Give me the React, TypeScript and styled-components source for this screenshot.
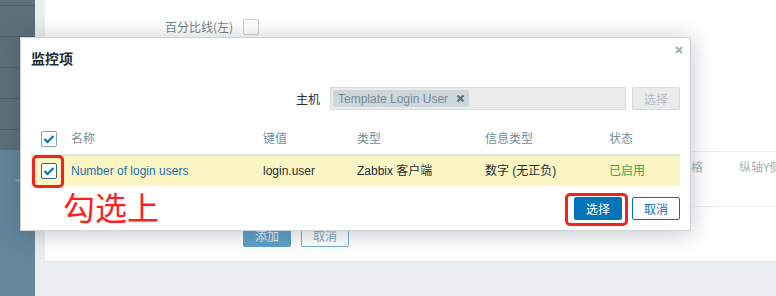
import React from "react";
import styled, { createGlobalStyle, css } from "styled-components";

const FONT = `"Liberation Sans", Arial, "Noto Sans CJK SC", sans-serif`;
const CJK = `"Noto Sans CJK SC", "Liberation Sans", sans-serif`;

const GlobalStyle = createGlobalStyle`
  html, body {
    margin: 0;
    padding: 0;
  }
  body {
    width: 776px;
    height: 296px;
    overflow: hidden;
    font-family: ${FONT};
    font-size: 12px;
    color: #1f2c33;
    background: #ebeef0;
  }
`;

const Page = styled.div`
  position: relative;
  display: flex;
  width: 776px;
  height: 296px;
  overflow: hidden;
`;

/* ---------- background page (faded behind the dialog) ---------- */

const Sidebar = styled.nav`
  flex: none;
  width: 35px;
  background: #64859b;
  display: flex;
  flex-direction: column;
`;

const MenuBlock = styled.div`
  height: 150px;
  padding-top: 5px;
  box-sizing: border-box;
  background: #5c6f7b;
  overflow: hidden;
`;

const MenuItem = styled.div`
  height: 31px;
  box-sizing: border-box;
  border-top: 1px solid #4f616c;
`;

const Chevron = styled.svg`
  margin: 28px 0 0 15px;
`;

const Main = styled.main`
  flex: 1;
  padding-left: 10px;
  background: #ebeef0;
`;

const Panel = styled.section`
  height: 262px;
  box-sizing: border-box;
  padding-top: 19px;
  background: #fff;
  border-bottom: 1px solid #dfe4e7;
`;

const FormRow = styled.div<{ $top?: number }>`
  display: grid;
  grid-template-columns: 188px 1fr;
  column-gap: 10px;
  align-items: center;
  margin-top: ${(p) => p.$top ?? 0}px;
`;

const FormLabel = styled.label`
  text-align: right;
  color: #76858d;
  font-family: ${CJK};
  font-size: 12px;
  line-height: 16px;
`;

const FadedBox = styled.span`
  display: block;
  width: 16px;
  height: 16px;
  box-sizing: border-box;
  border: 1px solid #c8d0d5;
  border-radius: 2px;
  background: #fff;
`;

const BgTable = styled.div`
  height: 56px;
  box-sizing: border-box;
  border-top: 1px solid #eceff1;
  border-bottom: 1px solid #eceff1;
  display: grid;
  grid-template-columns: 270px 142px 84px 1fr;
  align-content: start;
  padding-top: 7px;
  color: #a5b2b9;
  font-family: ${CJK};
  line-height: 16px;
  white-space: nowrap;
`;

const BgButtons = styled.div`
  display: flex;
  gap: 10px;
`;

const BgButton = styled.span<{ $primary?: boolean }>`
  width: 48px;
  height: 22px;
  box-sizing: border-box;
  border-radius: 2px;
  text-align: center;
  line-height: 20px;
  font-family: ${CJK};
  ${(p) =>
    p.$primary
      ? css`
          background: #5d9fc9;
          border: 1px solid #5d9fc9;
          color: #e8f1f7;
        `
      : css`
          background: #fff;
          border: 1px solid #78a9cc;
          color: #7ea6c4;
        `}
`;

/* ---------- dialog ---------- */

const Dialog = styled.div`
  position: absolute;
  left: 20px;
  top: 37px;
  width: 671px;
  height: 194px;
  box-sizing: border-box;
  padding: 11px 10px 0;
  background: #fff;
  border: 1px solid #ccd4d8;
  box-shadow: 0 2px 22px rgba(40, 50, 60, 0.28);
`;

const CloseButton = styled.svg`
  position: absolute;
  top: 8px;
  right: 7px;
`;

const Title = styled.h4`
  margin: 0;
  font-family: ${CJK};
  font-size: 14px;
  line-height: 18px;
  font-weight: 700;
  color: #1f2c33;
`;

const HostRow = styled.div`
  margin-top: 20px;
  display: grid;
  grid-template-columns: 289px 296px 48px;
  column-gap: 10px;
  align-items: center;
  & > :last-child {
    margin-left: -4px;
  }
`;

const HostLabel = styled.label`
  text-align: right;
  font-family: ${CJK};
  line-height: 16px;
  color: #1f2c33;
`;

const MultiSelect = styled.div`
  height: 23px;
  box-sizing: border-box;
  padding: 2px;
  background: #ebebeb;
  border: 1px solid #d9dcdd;
  display: flex;
  align-items: center;
`;

const Tag = styled.span`
  display: inline-flex;
  align-items: center;
  gap: 8px;
  height: 17px;
  padding: 0 4px 0 5px;
  background: #cdd6db;
  border-radius: 2px;
  color: #768d99;
  font-size: 12px;
  line-height: 16px;
`;

const Button = styled.button<{ $variant: "primary" | "outline" | "disabled" }>`
  width: 48px;
  height: 23px;
  padding: 0;
  box-sizing: border-box;
  border-radius: 2px;
  font-family: ${CJK};
  font-size: 12px;
  line-height: 21px;
  cursor: pointer;
  ${(p) =>
    p.$variant === "primary"
      ? css`
          background: #0275b8;
          border: 1px solid #0275b8;
          color: #fff;
        `
      : p.$variant === "outline"
      ? css`
          background: #fff;
          border: 1px solid #0275b8;
          color: #0275b8;
        `
      : css`
          background: #ebebeb;
          border: 1px solid #d9dcdd;
          color: #b5c0c6;
        `}
`;

const TableRow = styled.div<{ $head?: boolean }>`
  display: grid;
  grid-template-columns: 40px 192px 94px 128px 124px 1fr;
  align-items: center;
  height: 30px;
  white-space: nowrap;
  ${(p) =>
    p.$head
      ? css`
          margin-top: 14px;
          border-bottom: 2px solid #dfe4e7;
          color: #768d99;
        `
      : css`
          background: #fbf5c3;
          color: #1f2c33;
        `}
`;

const Cell = styled.div<{ $tone?: "link" | "ok" }>`
  position: relative;
  height: 16px;
  font-family: ${FONT};
  font-size: 12px;
  line-height: 16px;
  color: ${(p) =>
    p.$tone === "link" ? "#1b6fae" : p.$tone === "ok" ? "#429e47" : "inherit"};
`;

const CheckCell = styled(Cell)`
  padding-left: 10px;
`;

const Box = styled.span<{ $dark?: boolean }>`
  display: flex;
  align-items: center;
  justify-content: center;
  width: 16px;
  height: 16px;
  box-sizing: border-box;
  background: #fff;
  border: 1px solid ${(p) => (p.$dark ? "#3f6384" : "#8fa1ab")};
  border-radius: 2px;
`;

const Highlight = styled.span`
  position: absolute;
  box-sizing: border-box;
  border: 3px solid #f5221c;
  border-radius: 5px;
  pointer-events: none;
`;

const Footer = styled.div`
  display: flex;
  align-items: flex-start;
  justify-content: space-between;
`;

const Annotation = styled.span`
  margin: 4px 0 0 32px;
  font-family: ${CJK};
  font-size: 32px;
  line-height: 32px;
  color: #fe1f1f;
`;

const FooterButtons = styled.div`
  display: flex;
  gap: 10px;
  padding-top: 11px;
`;

const Marked = styled.span`
  position: relative;
  display: block;
`;

const Check = () => (
  <svg width="12" height="12" viewBox="0 0 12 12">
    <polyline
      points="1.5,6 4.5,9 10.5,3"
      fill="none"
      stroke="#0275b8"
      strokeWidth="2.2"
    />
  </svg>
);

const CheckBox: React.FC<{ dark?: boolean }> = ({ dark }) => (
  <Box $dark={dark}>
    <Check />
  </Box>
);

const items = [
  {
    name: "Number of login users",
    key: "login.user",
    type: "Zabbix 客户端",
    valueType: "数字 (无正负)",
    status: "已启用",
  },
];

export default function App() {
  return (
    <Page>
      <GlobalStyle />
      <Sidebar>
        <MenuBlock>
          {[0, 1, 2, 3, 4].map((i) => (
            <MenuItem key={i} />
          ))}
        </MenuBlock>
        <Chevron width="6" height="5" viewBox="0 0 6 5">
          <polyline points="0.5,1 3,3.5 5.5,1" fill="none" stroke="#b8c8d3" strokeWidth="1" />
        </Chevron>
      </Sidebar>

      <Main>
        <Panel>
          <FormRow>
            <FormLabel>百分比线(左)</FormLabel>
            <FadedBox />
          </FormRow>
          <FormRow $top={116}>
            <span />
            <BgTable>
              {/* first two columns sit behind the dialog */}
              <span />
              <span />
              <span>绘图风格</span>
              <span>纵轴Y侧</span>
            </BgTable>
          </FormRow>
          <FormRow $top={18}>
            <span />
            <BgButtons>
              <BgButton $primary>添加</BgButton>
              <BgButton>取消</BgButton>
            </BgButtons>
          </FormRow>
        </Panel>
      </Main>

      <Dialog>
        <CloseButton width="8" height="8" viewBox="0 0 8 8">
          <path d="M1 1L7 7M7 1L1 7" stroke="#a3afb6" strokeWidth="2" />
        </CloseButton>
        <Title>监控项</Title>

        <HostRow>
          <HostLabel>主机</HostLabel>
          <MultiSelect>
            <Tag>
              Template Login User
              <svg width="9" height="9" viewBox="0 0 9 9">
                <path d="M1.5 1.5L7.5 7.5M7.5 1.5L1.5 7.5" stroke="#5f7481" strokeWidth="2.2" />
              </svg>
            </Tag>
          </MultiSelect>
          <Button $variant="disabled">选择</Button>
        </HostRow>

        <TableRow $head>
          <CheckCell>
            <CheckBox />
          </CheckCell>
          <Cell>名称</Cell>
          <Cell>键值</Cell>
          <Cell>类型</Cell>
          <Cell>信息类型</Cell>
          <Cell>状态</Cell>
        </TableRow>
        {items.map((item) => (
          <TableRow key={item.key}>
            <CheckCell>
              <CheckBox dark />
              <Highlight style={{ left: 1, top: -8, width: 32, height: 33 }} />
            </CheckCell>
            <Cell $tone="link">{item.name}</Cell>
            <Cell>{item.key}</Cell>
            <Cell>{item.type}</Cell>
            <Cell>{item.valueType}</Cell>
            <Cell $tone="ok">{item.status}</Cell>
          </TableRow>
        ))}

        <Footer>
          <Annotation>勾选上</Annotation>
          <FooterButtons>
            <Marked>
              <Button $variant="primary">选择</Button>
              <Highlight style={{ left: -9, top: -4, right: -6, bottom: -6 }} />
            </Marked>
            <Button $variant="outline">取消</Button>
          </FooterButtons>
        </Footer>
      </Dialog>
    </Page>
  );
}
